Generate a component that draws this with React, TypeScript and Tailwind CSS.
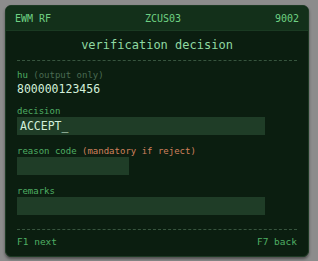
import React from 'react';

const mono = { fontFamily: '"DejaVu Sans Mono", "Liberation Mono", monospace' };

const Field: React.FC<{ label: React.ReactNode; value?: string; width: string; className?: string }> = ({
  label,
  value,
  width,
  className = '',
}) => (
  <div className={`flex flex-col ${className}`}>
    <div className="text-[9px] leading-[11px] text-[#4fae64]">{label}</div>
    <div className={`h-[18px] ${width} bg-[#1f3d27] px-[3px] text-[11.5px] leading-[18px] text-[#d3f0da]`}>
      {value}
    </div>
  </div>
);

const App: React.FC = () => {
  return (
    <div className="w-[318px] h-[261px] bg-[#8c8c8c] p-[5px]" style={mono}>
      <div className="w-[304px] h-[252px] flex flex-col rounded-[6px] border border-[#1d3a24] bg-[#0b1e10] overflow-hidden shadow-[0_2px_3px_rgba(0,0,0,0.45)]">
        <div className="h-[25px] shrink-0 flex items-center justify-between px-[9px] bg-[#13301a] border-b border-[#1a3a22] text-[10px] text-[#6fd083]">
          <span>EWM RF</span>
          <span>ZCUS03</span>
          <span>9002</span>
        </div>

        <div className="flex flex-col px-[11px]">
          <div className="pt-[6px] text-center text-[12px] leading-[16px] text-[#8fd9a2]">verification decision</div>
          <div className="mt-[7px] border-t border-dashed border-[#37553e]" />

          <div className="mt-[9px] text-[9px] leading-[11px]">
            <span className="text-[#4fae64]">hu</span> <span className="text-[#4a6b52]">(output only)</span>
          </div>
          <div className="mt-px text-[11.5px] leading-[14px] text-[#d3f0da]">800000123456</div>

          <Field className="mt-[10px]" label="decision" value="ACCEPT_" width="w-[248px]" />
          <Field
            className="mt-[11px]"
            label={
              <>
                reason code <span className="text-[#d0805c]">(mandatory if reject)</span>
              </>
            }
            width="w-[112px]"
          />
          <Field className="mt-[11px]" label="remarks" width="w-[248px]" />

          <div className="mt-[14px] border-t border-dashed border-[#37553e]" />
          <div className="mt-[6px] flex justify-between text-[9.5px] leading-[12px] text-[#4fae64]">
            <span>F1 next</span>
            <span>F7 back</span>
          </div>
        </div>
      </div>
    </div>
  );
};

export default App;
